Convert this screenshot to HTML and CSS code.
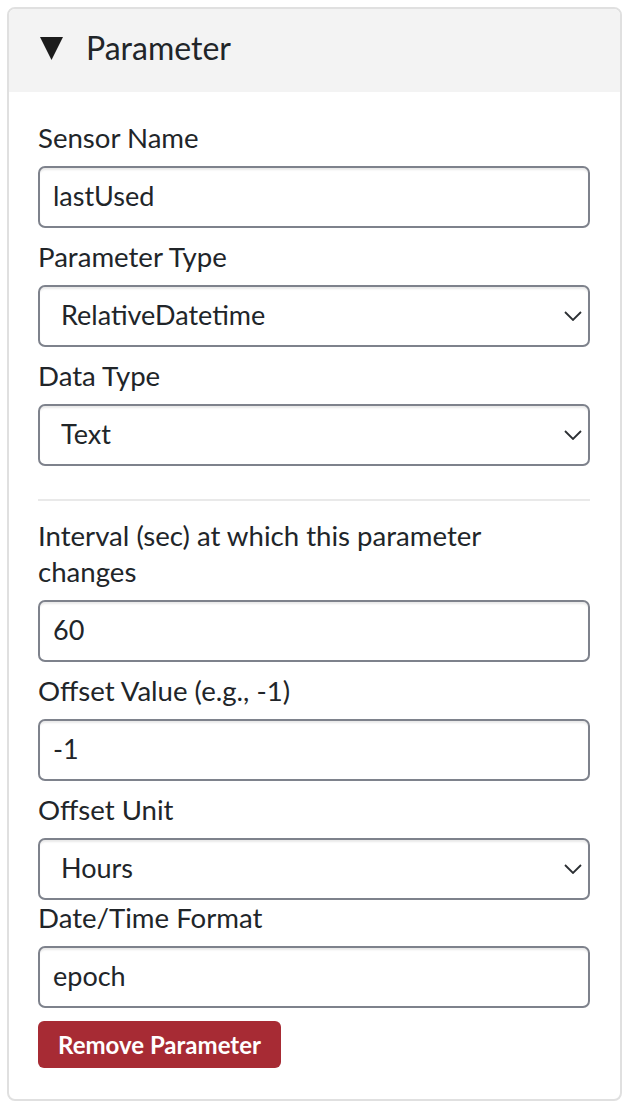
FILE: index.html
```html
<!DOCTYPE html>
<html lang="en">
<head>
<meta charset="utf-8">
<title>Parameter</title>
<link rel="stylesheet" href="styles.css">
</head>
<body>
<div class="card">
  <div class="card-header">
    <svg class="caret" width="23" height="23" viewBox="0 0 23 23"><polygon points="0,0 23,0 11.5,23" fill="#1c1c1c"/></svg>
    <span class="card-title">Parameter</span>
  </div>
  <div class="card-body">
    <div class="group">
      <label class="label">Sensor Name</label>
      <input class="control" type="text" value="lastUsed">
    </div>
    <div class="group">
      <label class="label">Parameter Type</label>
      <div class="select-wrap">
        <select class="control select"><option>RelativeDatetime</option></select>
        <svg class="chevron" width="18" height="10" viewBox="0 0 18 10"><polyline points="1,1 9,9 17,1" fill="none" stroke="#2b2f33" stroke-width="1.8"/></svg>
      </div>
    </div>
    <div class="group">
      <label class="label">Data Type</label>
      <div class="select-wrap">
        <select class="control select"><option>Text</option></select>
        <svg class="chevron" width="18" height="10" viewBox="0 0 18 10"><polyline points="1,1 9,9 17,1" fill="none" stroke="#2b2f33" stroke-width="1.8"/></svg>
      </div>
    </div>
    <hr class="divider">
    <div class="group">
      <label class="label">Interval (sec) at which this parameter changes</label>
      <input class="control" type="text" value="60">
    </div>
    <div class="group">
      <label class="label">Offset Value (e.g., -1)</label>
      <input class="control" type="text" value="-1">
    </div>
    <div class="group group-tight">
      <label class="label">Offset Unit</label>
      <div class="select-wrap">
        <select class="control select"><option>Hours</option></select>
        <svg class="chevron" width="18" height="10" viewBox="0 0 18 10"><polyline points="1,1 9,9 17,1" fill="none" stroke="#2b2f33" stroke-width="1.8"/></svg>
      </div>
    </div>
    <div class="group group-tight">
      <label class="label">Date/Time Format</label>
      <input class="control" type="text" value="epoch">
    </div>
    <button class="btn-remove" type="button">Remove Parameter</button>
  </div>
</div>
</body>
</html>
```
FILE: styles.css
```css
* { box-sizing: border-box; }
html, body { margin: 0; padding: 0; background: #ffffff; }
body {
  padding: 7px 6px 0 7px;
  font-family: Lato, "Noto Sans", sans-serif;
  color: #212529;
}
.card {
  width: 615px;
  border: 2px solid #e0e0e0;
  border-radius: 8px;
  overflow: hidden;
  background: #fff;
}
.card-header {
  height: 83px;
  background: #f3f3f3;
  display: flex;
  align-items: center;
  gap: 23px;
  padding: 0 0 5px 31px;
}
.caret { display: block; flex: none; }
.card-title {
  font-size: 32px;
  line-height: 36px;
  color: #212529;
}
.card-body {
  padding: 28px 30px 31px 29px;
}
.group { margin-bottom: 11px; }
.group-tight { margin-bottom: 0; }
.label {
  display: block;
  font-size: 27.6px;
  line-height: 36px;
  margin-bottom: 10px;
  padding-right: 10px;
}
.control {
  display: block;
  width: 100%;
  height: 62px;
  margin: 0;
  border: 2px solid #7e828c;
  border-radius: 7px;
  padding: 0 13px 3px;
  font-family: Lato, "Noto Sans", sans-serif;
  font-size: 27px;
  color: #212529;
  background: #fff;
  box-shadow: inset 0 3px 2px -1px rgba(0,0,0,0.09);
  outline: none;
}
.select-wrap { position: relative; }
.select {
  appearance: none;
  -webkit-appearance: none;
  padding-left: 21px;
  padding-right: 40px;
}
.chevron {
  position: absolute;
  right: 8px;
  top: 26px;
  pointer-events: none;
}
.divider {
  border: 0;
  border-top: 2px solid #e9e9e9;
  margin: 33px 0 17px;
  height: 0;
}
.btn-remove {
  display: block;
  margin-top: 13px;
  height: 47px;
  padding: 0 20px;
  border: 0;
  border-radius: 6px;
  background: #a72b34;
  color: #fff;
  font-family: Lato, "Noto Sans", sans-serif;
  font-weight: 700;
  font-size: 24px;
}
```
